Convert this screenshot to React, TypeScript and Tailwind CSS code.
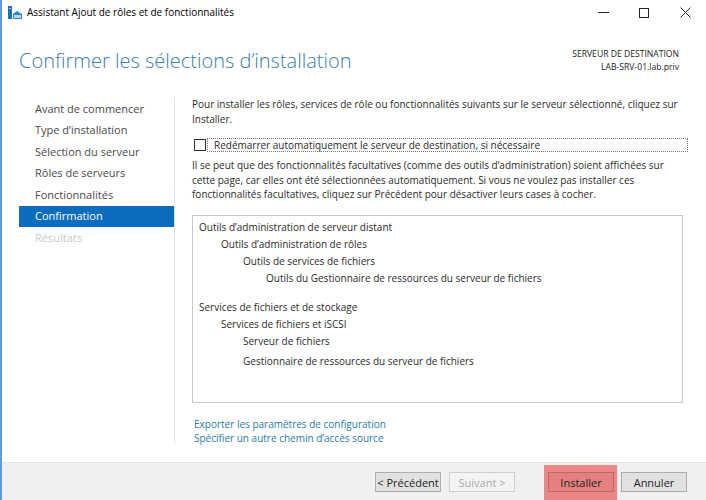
import React from "react";

const navItems = [
  { label: "Avant de commencer", state: "done" },
  { label: "Type d’installation", state: "done" },
  { label: "Sélection du serveur", state: "done" },
  { label: "Rôles de serveurs", state: "done" },
  { label: "Fonctionnalités", state: "done" },
  { label: "Confirmation", state: "active" },
  { label: "Résultats", state: "disabled" },
];

const treeGroups = [
  [
    { text: "Outils d’administration de serveur distant", level: 0 },
    { text: "Outils d’administration de rôles", level: 1 },
    { text: "Outils de services de fichiers", level: 2 },
    { text: "Outils du Gestionnaire de ressources du serveur de fichiers", level: 3 },
  ],
  [
    { text: "Services de fichiers et de stockage", level: 0 },
    { text: "Services de fichiers et iSCSI", level: 1 },
    { text: "Serveur de fichiers", level: 2 },
    { text: "Gestionnaire de ressources du serveur de fichiers", level: 2, gap: true },
  ],
];

const indentClass = ["pl-[6px]", "pl-[28px]", "pl-[50px]", "pl-[73px]"];

const AppIcon = () => (
  <svg width="15" height="14" viewBox="0 0 15 14">
    <rect x="0" y="0" width="4" height="13" fill="#1d6fb8" />
    <rect x="1" y="2" width="2" height="1" fill="#9cc8ec" />
    <path d="M5 13 L5 8 L9 5 L14 8 L14 13 Z" fill="#2b84cc" />
    <rect x="6" y="9" width="7" height="3" fill="#bcd9f1" />
  </svg>
);

const TitleBar = () => (
  <div className="h-[25px] flex items-center bg-white">
    <div className="pl-[6px] pr-[4px] flex items-center">
      <AppIcon />
    </div>
    <span className="text-[10px] text-black">Assistant Ajout de rôles et de fonctionnalités</span>
    <div className="ml-auto flex items-center h-full">
      <div className="w-[42px] h-full flex items-center justify-center">
        <div className="w-[11px] h-px bg-[#222]" />
      </div>
      <div className="w-[40px] h-full flex items-center justify-center">
        <div className="w-[10px] h-[10px] border border-[#222]" />
      </div>
      <div className="w-[42px] h-full flex items-center justify-center">
        <svg width="11" height="11" viewBox="0 0 11 11">
          <path d="M0.5 0.5 L10.5 10.5 M10.5 0.5 L0.5 10.5" stroke="#222" strokeWidth="1" />
        </svg>
      </div>
    </div>
  </div>
);

const Button: React.FC<{ label: string; disabled?: boolean; highlight?: boolean }> = ({
  label,
  disabled,
  highlight,
}) => (
  <div className="relative flex">
    {highlight && <span className="absolute -top-[7px] -left-[4px] -right-[3px] -bottom-[9px] bg-[#ec8686]" />}
    <button
      type="button"
      className={`relative block w-[66px] h-[20px] text-[11px] leading-none border ${
        disabled
          ? "border-[#cfcfcf] bg-[#f4f4f4] text-[#a8a8a8]"
          : highlight
            ? "border-[#b86a6a] bg-[#e58080] text-[#222]"
            : "border-[#adadad] bg-[#e1e1e1] text-[#222]"
      }`}
    >
      {label}
    </button>
  </div>
);

export default function App() {
  return (
    <div
      className="w-[706px] h-[500px] bg-white flex flex-col border-l-2 border-[#5c9fd8] overflow-hidden"
      style={{ fontFamily: '"Open Sans", "Liberation Sans", sans-serif' }}
    >
      <TitleBar />

      <div className="h-[72px] flex items-start justify-between pl-[17px] pr-[27px]">
        <h1 className="pt-[21px] text-[20px] leading-[30px] font-light text-[#3a80a8]">
          Confirmer les sélections d’installation
        </h1>
        <div className="pt-[23px] text-right text-[8.6px] leading-[13px] text-[#222]">
          <div>SERVEUR DE DESTINATION</div>
          <div>LAB-SRV-01.lab.priv</div>
        </div>
      </div>

      <div className="flex-1 flex min-h-0">
        <div className="w-[172px] pl-[17px] pt-px">
          {navItems.map((item) => (
            <div
              key={item.label}
              className={`h-[21.5px] pl-[16px] flex items-center text-[11px] ${
                item.state === "active"
                  ? "bg-[#0c6cbd] text-white"
                  : item.state === "disabled"
                    ? "text-[#c9c9c9]"
                    : "text-[#4a4a4a]"
              }`}
            >
              {item.label}
            </div>
          ))}
        </div>

        <div className="flex flex-col">
          <div className="w-px h-[346px] bg-[#e2e2e2]" />
        </div>

        <div className="flex-1 pl-[17px] pr-[18px] text-[10px] leading-[14.5px] text-[#2b2b2b]">
          <p>
            Pour installer les rôles, services de rôle ou fonctionnalités suivants sur le serveur sélectionné, cliquez sur
            Installer.
          </p>

          <div className="mt-[12px] flex items-center h-[14px]">
            <div className="w-[12px] h-[12px] border border-[#333] bg-white ml-[2px]" />
            <div className="flex-1 ml-px h-[14px] border border-dotted border-[#777] pl-[6px] flex items-center">
              Redémarrer automatiquement le serveur de destination, si nécessaire
            </div>
          </div>

          <p className="mt-[6px]">
            Il se peut que des fonctionnalités facultatives (comme des outils d’administration) soient affichées sur
            cette page, car elles ont été sélectionnées automatiquement. Si vous ne voulez pas installer ces
            fonctionnalités facultatives, cliquez sur Précédent pour désactiver leurs cases à cocher.
          </p>

          <div className="mt-[13px] h-[188px] w-[491px] border border-[#c8c8c8] pt-[3px]">
            {treeGroups.map((group, gi) => (
              <div key={gi} className={gi > 0 ? "mt-[12px]" : ""}>
                {group.map((row) => (
                  <div
                    key={row.text}
                    className={`h-[17px] flex items-center ${indentClass[row.level]} ${row.gap ? "mt-[3px]" : ""}`}
                  >
                    {row.text}
                  </div>
                ))}
              </div>
            ))}
          </div>

          <div className="mt-[14px] pl-[2px] text-[#1f7aa8]">
            <div>Exporter les paramètres de configuration</div>
            <div>Spécifier un autre chemin d’accès source</div>
          </div>
        </div>
      </div>

      <div className="h-[38px] shrink-0 bg-[#f0f0f0] border-t border-[#e3e3e3] flex items-start justify-end pt-[9px] pr-[19px]">
        <div className="flex gap-[8px]">
          <Button label="< Précédent" />
          <Button label="Suivant >" disabled />
        </div>
        <div className="flex gap-[7px] ml-[33px]">
          <Button label="Installer" highlight />
          <Button label="Annuler" />
        </div>
      </div>
    </div>
  );
}
